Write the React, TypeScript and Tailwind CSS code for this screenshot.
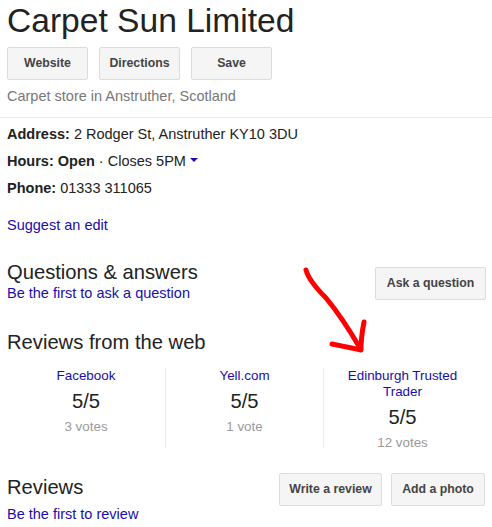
const font = { fontFamily: '"Liberation Sans", Arial, sans-serif' };

function Btn({ label, className = "" }: { label: string; className?: string }) {
  return (
    <button
      className={`h-[33px] rounded-[2px] border border-[#dcdcdc] bg-[#f5f5f5] text-[12.3px] font-bold text-[#444] ${className}`}
    >
      {label}
    </button>
  );
}

const sources = [
  { name: ["Facebook"], score: "5/5", votes: "3 votes" },
  { name: ["Yell.com"], score: "5/5", votes: "1 vote" },
  { name: ["Edinburgh Trusted", "Trader"], score: "5/5", votes: "12 votes" },
];

export default function App() {
  return (
    <div className="relative h-[527px] w-[492px] overflow-hidden bg-white text-[#222]" style={font}>
      <div className="px-[7px]">
        <h1 className="mt-[1px] h-[40px] text-[33.6px] leading-[40px] tracking-[0px]">Carpet Sun Limited</h1>
        <div className="mt-[6px] flex gap-[11px]">
          <Btn label="Website" className="w-[81px]" />
          <Btn label="Directions" className="w-[81px]" />
          <Btn label="Save" className="w-[81px]" />
        </div>
        <p className="mt-[6px] text-[14.5px] leading-[20px] text-[#777]">Carpet store in Anstruther, Scotland</p>
      </div>

      <div className="mt-[11px] h-[1px] bg-[#ebebeb]" />

      <div className="px-[7px] pt-[3px] text-[14.5px]">
        <p className="leading-[27px]">
          <b>Address:</b> 2 Rodger St, Anstruther KY10 3DU
        </p>
        <p className="leading-[27px]">
          <b>Hours:</b> <b>Open</b> · Closes 5PM{" "}
          <span className="relative -top-[2px] inline-block border-x-[4px] border-t-[4px] border-x-transparent border-t-[#1a0dab] align-middle" />
        </p>
        <p className="leading-[26px]">
          <b>Phone:</b> 01333 311065
        </p>
        <p className="mt-[14px] leading-[20px] text-[#1a0dab]">Suggest an edit</p>
      </div>

      <div className="mt-[25px] flex items-start justify-between pl-[7px] pr-[6px]">
        <div>
          <h2 className="text-[20.2px] leading-[24px]">Questions &amp; answers</h2>
          <p className="text-[14.5px] leading-[18px] text-[#1a0dab]">Be the first to ask a question</p>
        </div>
        <Btn label="Ask a question" className="mt-[7px] w-[111px]" />
      </div>

      <h2 className="mt-[28px] px-[7px] text-[20.2px] leading-[24px]">Reviews from the web</h2>

      <div className="mt-[14px] grid grid-cols-3 pl-[7px] pr-[11px]">
        {sources.map((s, i) => (
          <div
            key={i}
            className={`flex h-[80px] flex-col items-center text-center ${i > 0 ? "border-l border-[#ebebeb]" : ""}`}
          >
            <div className="text-[13.4px] leading-[16px] text-[#1a0dab]">
              {s.name.map((n) => (
                <div key={n}>{n}</div>
              ))}
            </div>
            <div className="mt-[5px] text-[20.2px] leading-[24px] text-[#222]">{s.score}</div>
            <div className="mt-[6px] text-[13.4px] leading-[16px] text-[#999]">{s.votes}</div>
          </div>
        ))}
      </div>

      <div className="mt-[25px] flex items-start justify-between pl-[7px] pr-[7px]">
        <div className="mt-[2px]">
          <h2 className="text-[20.2px] leading-[24px]">Reviews</h2>
          <p className="mt-[6px] text-[14.5px] leading-[18px] text-[#1a0dab]">Be the first to review</p>
        </div>
        <div className="flex gap-[9px]">
          <Btn label="Write a review" className="w-[103px]" />
          <Btn label="Add a photo" className="w-[94px]" />
        </div>
      </div>

      <svg className="absolute left-[294px] top-[260px]" width="80" height="100" viewBox="0 0 80 100" fill="none">
        <path
          d="M12 10 C14 18 22 28 32 38 C42 50 52 64 66 88"
          stroke="#ff0000"
          strokeWidth="5"
          strokeLinecap="round"
          strokeLinejoin="round"
        />
        <path
          d="M38 84 C48 86 58 88 67 90 C67 80 68 72 70 62"
          stroke="#ff0000"
          strokeWidth="5"
          strokeLinecap="round"
          strokeLinejoin="round"
        />
      </svg>
    </div>
  );
}
